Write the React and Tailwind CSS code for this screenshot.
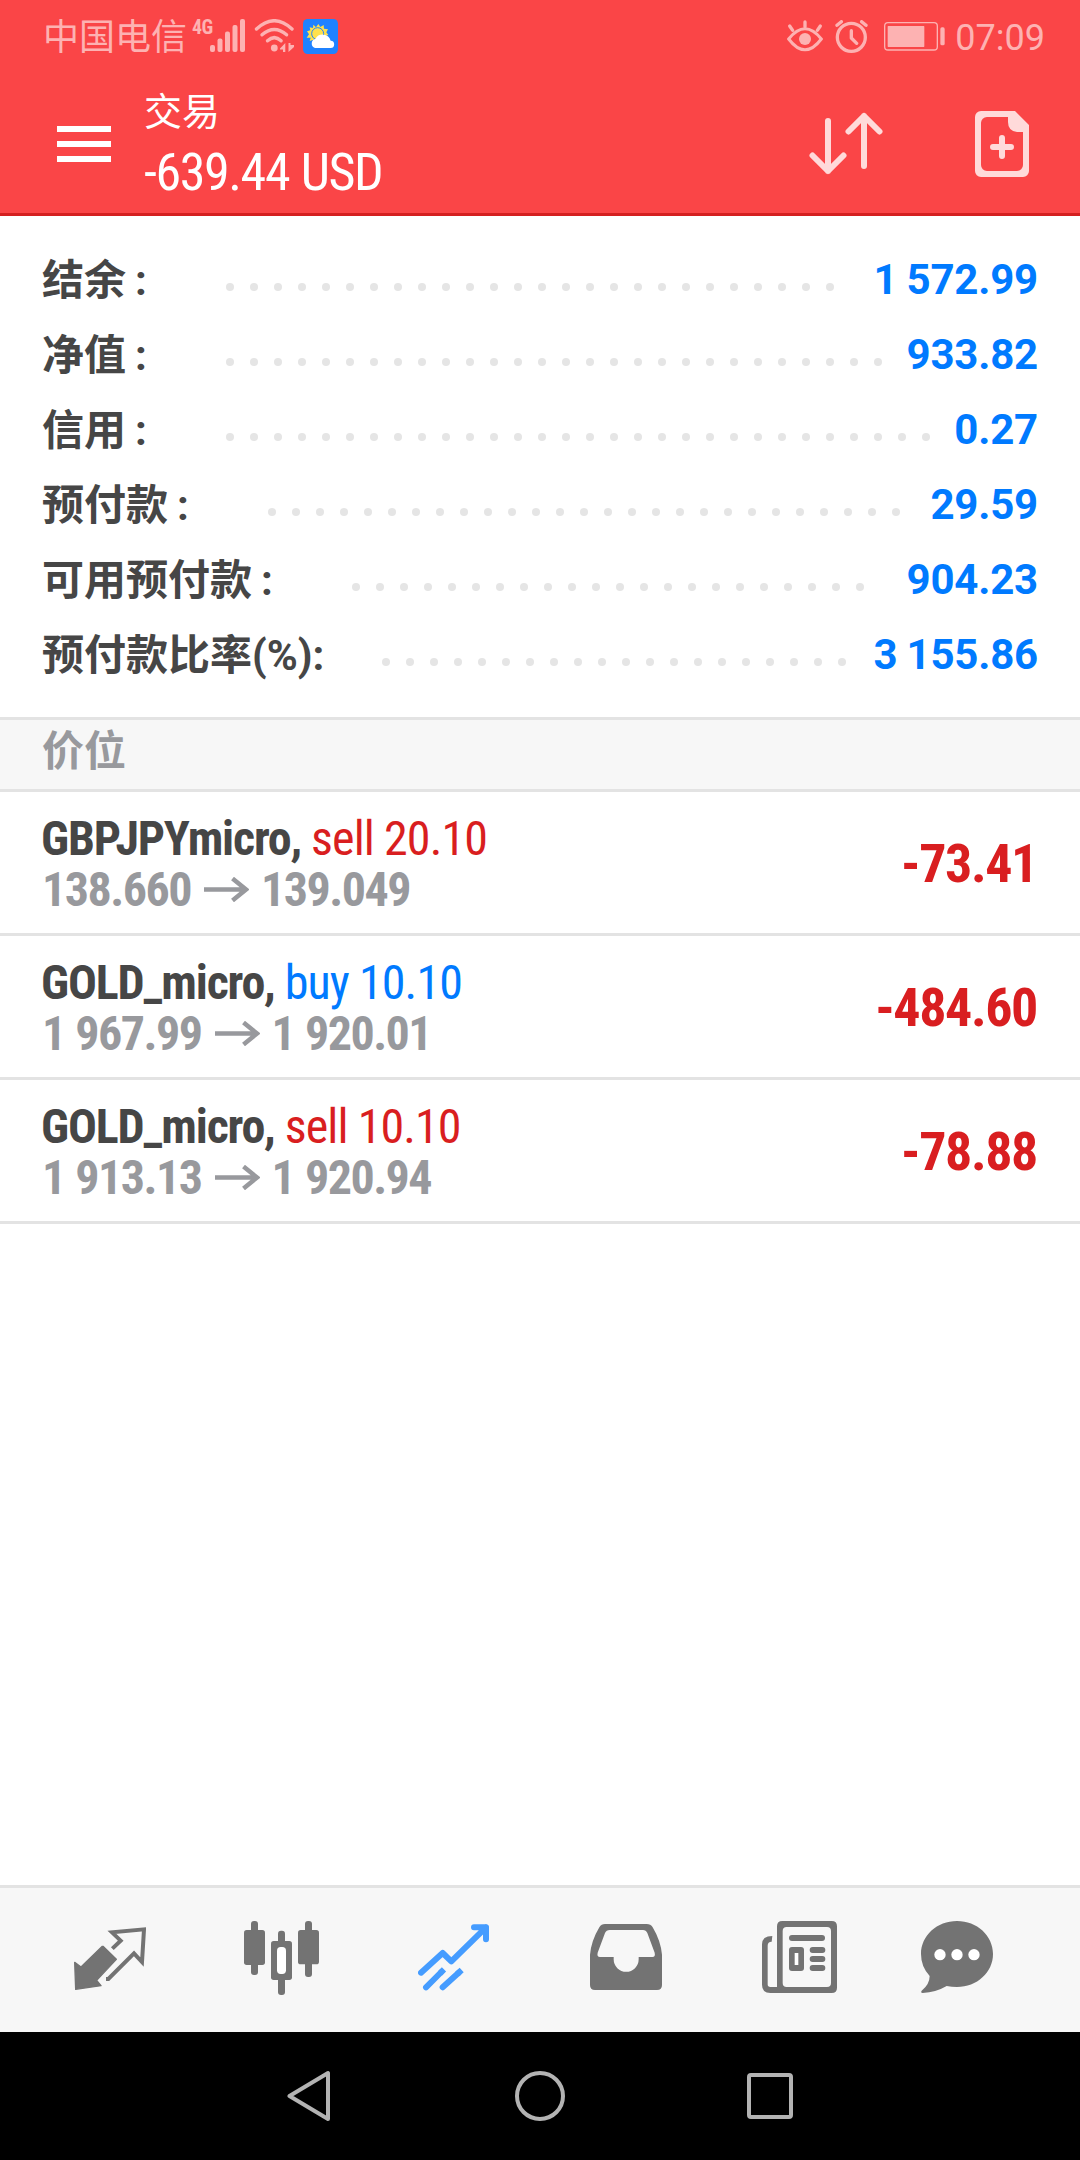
import clsx from "clsx";

const accountRows = [
  { label: "结余", wideColon: true, value: "1 572.99", dots: 26 },
  { label: "净值", wideColon: true, value: "933.82", dots: 28 },
  { label: "信用", wideColon: true, value: "0.27", dots: 30 },
  { label: "预付款", wideColon: true, value: "29.59", dots: 27 },
  { label: "可用预付款", wideColon: true, value: "904.23", dots: 22 },
  { label: "预付款比率(%)", value: "3 155.86", dots: 20 },
];

const positions = [
  {
    symbol: "GBPJPYmicro,",
    side: "sell",
    volume: "20.10",
    open: "138.660",
    current: "139.049",
    profit: "-73.41",
  },
  {
    symbol: "GOLD_micro,",
    side: "buy",
    volume: "10.10",
    open: "1 967.99",
    current: "1 920.01",
    profit: "-484.60",
  },
  {
    symbol: "GOLD_micro,",
    side: "sell",
    volume: "10.10",
    open: "1 913.13",
    current: "1 920.94",
    profit: "-78.88",
  },
];

const StatusBar = () => (
  <div className="flex h-[74px] items-start pt-[19px] pl-[43px] text-[#fdb2b2]">
    <span className="mt-px w-[149px] text-[36px] leading-[37px]">
      中国电信
    </span>
    <span className="w-[18px] font-['Roboto_Condensed','Roboto'] text-[20px] leading-[16px] font-bold tracking-[-0.5px] font-stretch-condensed">
      4G
    </span>
    <svg width="35" height="33" viewBox="0 0 35 33" fill="currentColor">
      <rect x="0" y="26" width="5" height="7" rx="2" />
      <rect x="7.5" y="19.5" width="5" height="13.5" rx="2" />
      <rect x="15" y="12.5" width="5" height="20.5" rx="2" />
      <rect x="22.5" y="6" width="5" height="27" rx="2" />
      <rect x="30" y="0" width="5" height="33" rx="2" />
    </svg>
    <svg
      className="ml-[9px]"
      width="42"
      height="34"
      viewBox="0 0 42 34"
      fill="none"
      stroke="currentColor"
      strokeWidth="3.4"
      strokeLinecap="round"
    >
      <path d="M2.5 10Q20.3-6.5 38 10" />
      <path d="M8 15.8Q20.3 5 32.6 15.8" />
      <path d="M13.5 21.8Q20.3 15.5 27.1 21.8" />
      <circle cx="20.3" cy="29" r="3.4" fill="currentColor" stroke="none" />
      <path
        d="M26 29.500L31.300 24V33H29V30.500H26ZM34.500 24V33L40 28V26H36.500V24Z"
        fill="currentColor"
        stroke="none"
      />
    </svg>
    <svg className="ml-[7px]" width="35" height="35" viewBox="0 0 105 105">
      <rect width="105" height="105" rx="14" fill="#1f82ff" />
      <path
        d="M31 17L39 25L46 15L52 24L62 18L63 29L75 31L70 40L76 48L20 66L23 56L11 56L18 46L12 37L22 34L20 25L30 27Z"
        fill="#ffe14d"
      />
      <circle
        cx="44"
        cy="44"
        r="18"
        fill="#ffe14d"
        stroke="#1f82ff"
        strokeWidth="3"
      />
      <path
        d="M36 87a14 14 0 0 1 1-27 25 25 0 0 1 46 5 11 11 0 0 1-1 22z"
        fill="#fff"
      />
    </svg>

    <svg
      className="mt-px ml-auto"
      width="36"
      height="33"
      viewBox="0 0 108 99"
      fill="none"
      stroke="currentColor"
      strokeWidth="10"
      strokeLinecap="round"
    >
      <path d="M54 6V20M8 18L17 31M100 18L91 31" />
      <path d="M5 57Q54-4 103 57Q54 122 5 57Z" strokeWidth="9" />
      <circle cx="54" cy="57" r="18" fill="currentColor" stroke="none" />
    </svg>
    <svg
      className="mt-px ml-[12px]"
      width="33"
      height="33"
      viewBox="0 0 99 99"
      fill="none"
      stroke="currentColor"
      strokeWidth="10"
      strokeLinecap="round"
      strokeLinejoin="round"
    >
      <circle cx="49" cy="52" r="42" />
      <path d="M6 16L19 5M93 16L80 5M49 32V54L65 70" />
    </svg>
    <svg className="mt-[3px] ml-[16px]" width="61" height="29" viewBox="0 0 183 87">
      <rect
        x="2"
        y="2"
        width="158"
        height="82"
        rx="10"
        fill="none"
        stroke="currentColor"
        strokeWidth="4"
      />
      <rect x="11" y="12" width="110" height="63" rx="2" fill="currentColor" />
      <rect x="169" y="16" width="13" height="54" rx="5" fill="currentColor" />
    </svg>
    <span className="mt-px mr-[35px] ml-[10px] text-[36px] leading-[37px]">
      07:09
    </span>
  </div>
);

const Header = () => (
  <header className="h-[216px] border-b-[3px] border-[#d42020] bg-[#fa4547] text-white">
    <StatusBar />
    <div className="flex h-[139px] items-start pl-[57px]">
      <div className="mt-[52px] flex flex-col gap-[9px]">
        <div className="h-[6px] w-[54px] bg-white" />
        <div className="h-[6px] w-[54px] bg-white" />
        <div className="h-[6px] w-[54px] bg-white" />
      </div>
      <div className="ml-[33px] pt-[18px]">
        <div className="text-[38px] leading-[40px]">交易</div>
        <div className="mt-[11px] font-['Roboto_Condensed','Roboto'] text-[52px] leading-[60px] tracking-[-1.4px] whitespace-nowrap [word-spacing:1px] font-stretch-condensed">
          -639.44 USD
        </div>
      </div>
      <svg
        className="mt-[38px] mr-[92px] ml-auto text-[#ffdada]"
        width="74"
        height="64"
        viewBox="0 0 74 64"
        fill="none"
        stroke="currentColor"
        strokeWidth="6"
        strokeLinecap="round"
        strokeLinejoin="round"
      >
        <path d="M19 9V59M3.500 43.500L19 59L34.500 43.500" />
        <path d="M55 54V4M39.500 19.500L55 4L70.500 19.500" />
      </svg>
      <svg
        className="mt-[37px] mr-[51px] text-[#ffdada]"
        width="54"
        height="66"
        viewBox="0 0 54 66"
        fill="currentColor"
      >
        <path
          fillRule="evenodd"
          d="M6 0H40L54 14V60a6 6 0 0 1-6 6H6a6 6 0 0 1-6-6V6a6 6 0 0 1 6-6ZM12 6a6 6 0 0 0-6 6V54a6 6 0 0 0 6 6H42a6 6 0 0 0 6-6V21H42Q33 20 33 11V6Z"
        />
        <path
          d="M18 36H36M27 27V45"
          stroke="currentColor"
          strokeWidth="6"
          strokeLinecap="round"
        />
      </svg>
    </div>
  </header>
);

const AccountRow = ({ label, wideColon, value, dots }) => (
  <div className="flex h-[75px] items-center">
    <span className="text-[42px] leading-[60px] font-bold text-[#464646]">
      {label}
      <span className={clsx(wideColon && "inline-block w-[42px] pl-[9px]")}>
        :
      </span>
    </span>
    <div className="mt-[13px] ml-[58px] flex gap-4">
      {Array.from({ length: dots }, (_, i) => (
        <span key={i} className="size-2 rounded-full bg-[#e5e5e5]" />
      ))}
    </div>
    <span className="-mt-[2px] ml-auto text-[42px] leading-[60px] font-bold tracking-[-0.2px] [word-spacing:-1px] text-[#007aff]">
      {value}
    </span>
  </div>
);

const PositionRow = ({ position }) => (
  <div className="flex h-36 items-center justify-between border-b-[3px] border-[#e3e3e3] pt-[2px] pr-[43px] pl-[41px] font-['Roboto_Condensed','Roboto'] whitespace-nowrap font-stretch-condensed">
    <div className="text-[48px] leading-[51px]">
      <div className="tracking-[-0.9px]">
        <span className="font-bold tracking-[-1.2px] text-[#464646]">
          {position.symbol}
        </span>{" "}
        <span
          className={clsx(
            position.side === "buy" ? "text-[#007aff]" : "text-[#d91e20]",
          )}
        >
          {position.side} {position.volume}
        </span>
      </div>
      <div className="flex items-center pl-px font-bold tracking-[-1.5px] text-[#98999d] [word-spacing:1px]">
        <span>{position.open}</span>
        <svg
          className="mr-[12px] ml-[13px]"
          width="45"
          height="25"
          viewBox="0 0 45 25"
          fill="none"
          stroke="currentColor"
          strokeWidth="4.5"
        >
          <path d="M0 12.500H42M28.500 1.500L42 12.500L28.500 23.500" />
        </svg>
        <span>{position.current}</span>
      </div>
    </div>
    <span className="text-[54px] font-bold tracking-[-1.4px] text-[#d91e20]">
      {position.profit}
    </span>
  </div>
);

const TabBar = () => (
  <nav className="flex h-[147px] items-start border-t-[3px] border-[#e3e3e3] bg-[#f7f7f7] text-[#737373]">
    {/* quotes */}
    <svg className="mt-[39px] ml-[74px]" width="72" height="64" viewBox="0 0 216 192">
      <path
        d="M87 58L127 97L68 160L81 176L5 187L2 106L21 120L85 58Z"
        fill="currentColor"
        stroke="currentColor"
        strokeWidth="4"
        strokeLinejoin="round"
      />
      <path
        d="M115 65L140 41L114 16L210 7L204 105L180 79L103 156H96"
        fill="none"
        stroke="currentColor"
        strokeWidth="12"
      />
    </svg>
    {/* chart */}
    <svg
      className="mt-[33px] ml-[98px]"
      width="75"
      height="74"
      viewBox="0 0 225 222"
      fill="currentColor"
    >
      <rect x="21" y="0" width="21" height="162" rx="9" />
      <rect x="0" y="27" width="63" height="105" rx="8" />
      <rect x="183" y="0" width="21" height="168" rx="9" />
      <rect x="162" y="27" width="63" height="103" rx="8" />
      <rect x="102" y="29" width="21" height="60" rx="9" />
      <rect x="102" y="160" width="21" height="62" rx="9" />
      <rect x="81" y="60" width="63" height="117" rx="8" />
      <rect x="99" y="78" width="27" height="81" rx="11" fill="#fff" />
    </svg>
    {/* trade, the active tab */}
    <svg
      className="mt-[36px] ml-[99px] text-[#459cff]"
      width="71"
      height="67"
      viewBox="0 0 213 201"
      fill="none"
      stroke="currentColor"
      strokeWidth="18"
      strokeLinecap="round"
      strokeLinejoin="round"
    >
      <path d="M9 146L74 87L100 112L204 10M168 10H204V46" />
      <path d="M24 190L70 144M74 190L122 146" />
      <path d="M66 148L78 136M118 150L131 138" strokeLinecap="butt" />
    </svg>
    {/* history */}
    <svg
      className="mt-[36px] ml-[101px]"
      width="72"
      height="66"
      viewBox="0 0 216 198"
      fill="currentColor"
    >
      <path
        fillRule="evenodd"
        d="M45 0H170Q182 0 188 10Q212 50 216 92V183Q216 198 201 198H15Q0 198 0 183V92Q4 50 28 10Q34 0 45 0ZM59 18Q49 18 45 27L23 86Q20 99 30 99H71V106A37 37 0 0 0 146 106V99H187Q197 99 194 86L172 27Q168 18 159 18Z"
      />
    </svg>
    {/* news */}
    <svg
      className="mt-[33px] ml-[100px]"
      width="75"
      height="72"
      viewBox="0 0 225 216"
      fill="currentColor"
    >
      <path
        fillRule="evenodd"
        d="M61 0H209Q225 0 225 16V200Q225 216 209 216H25Q0 216 0 191V70Q0 45 31 45L29 62Q17 62 17 74V190Q17 198 25 198H45V16Q45 0 61 0ZM74 18Q62 18 62 30V186Q62 198 74 198H195Q207 198 207 186V30Q207 18 195 18Z"
      />
      <rect x="81" y="42" width="108" height="18" rx="9" />
      <rect x="143" y="78" width="47" height="18" rx="9" />
      <rect x="143" y="105" width="47" height="18" rx="9" />
      <rect x="143" y="132" width="47" height="18" rx="9" />
      <rect x="81" y="78" width="45" height="72" rx="9" />
      <rect x="98" y="96" width="11" height="36" fill="#fff" />
    </svg>
    {/* messages */}
    <svg className="mt-[33px] ml-[84px]" width="72" height="72" viewBox="0 0 216 216">
      <path
        d="M108 0C168 0 216 44 216 99S168 198 108 198Q92 198 77 195Q45 214 5 216Q-2 215 2 209Q26 190 26 165Q0 137 0 99C0 44 48 0 108 0Z"
        fill="currentColor"
      />
      <circle cx="57" cy="101" r="17" fill="#fff" />
      <circle cx="108" cy="101" r="17" fill="#fff" />
      <circle cx="159" cy="101" r="17" fill="#fff" />
    </svg>
  </nav>
);

const SystemNav = () => (
  <div className="flex h-32 items-center justify-between bg-black px-[287px] text-[#b3b3b3]">
    <svg
      width="46"
      height="52"
      viewBox="1 0 46 52"
      fill="none"
      stroke="currentColor"
      strokeWidth="4"
      strokeLinejoin="round"
    >
      <path d="M42 3V49L3.500 26Z" />
    </svg>
    <svg
      width="50"
      height="50"
      viewBox="0 0 50 50"
      fill="none"
      stroke="currentColor"
      strokeWidth="4"
    >
      <circle cx="25" cy="25" r="23" />
    </svg>
    <svg
      width="46"
      height="46"
      viewBox="0 0 46 46"
      fill="none"
      stroke="currentColor"
      strokeWidth="4"
    >
      <rect x="2" y="2" width="42" height="42" rx="2" />
    </svg>
  </div>
);

const App = () => {
  return (
    <div className="flex h-[2160px] w-[1080px] flex-col overflow-hidden bg-white font-['Roboto','Noto_Sans_CJK_SC',sans-serif]">
      <Header />

      <section className="h-[501px] pt-[27px] pr-[42px] pl-[42px]">
        {accountRows.map((row) => (
          <AccountRow key={row.label} {...row} />
        ))}
      </section>

      <div className="h-[75px] border-y-[3px] border-[#e3e3e3] bg-[#f7f7f7] pl-[42px] text-[42px] leading-[64px] font-bold text-[#98999d]">
        价位
      </div>

      <section className="flex-1">
        {positions.map((position) => (
          <PositionRow key={position.profit} position={position} />
        ))}
      </section>

      <TabBar />
      <SystemNav />
    </div>
  );
};

export default App;
